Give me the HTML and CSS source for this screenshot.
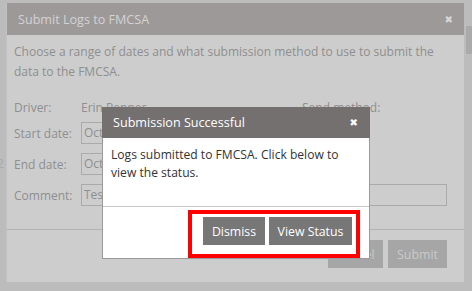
FILE: index.html
```html
<!DOCTYPE html>
<html>
<head>
<meta charset="utf-8">
<link rel="stylesheet" href="styles.css">
</head>
<body>
<div class="screen">
  <div class="side-mark">2</div>
  <div class="scroll-thumb"></div>
  <div class="dialog">
    <div class="dlg-header">
      <span class="dlg-title">Submit Logs to FMCSA</span>
      <span class="dlg-close">&#x2716;</span>
    </div>
    <div class="dlg-body">
      <p class="intro">Choose a range of dates and what submission method to use to submit the data to the FMCSA.</p>
      <div class="form">
        <div class="lbl top">Driver:</div>
        <div class="val top">Erin Penner</div>
        <div class="lbl top">Send method:</div>
        <div class="lbl">Start date:</div>
        <div class="field short">Oct 1, 2018</div>
        <div class="empty"></div>
        <div class="lbl">End date:</div>
        <div class="field short">Oct 7, 2018</div>
        <div class="empty"></div>
        <div class="lbl">Comment:</div>
        <div class="field wide">Test</div>
      </div>
    </div>
    <div class="dlg-footer">
      <button class="btn-muted">Cancel</button>
      <button class="btn-muted">Submit</button>
    </div>
  </div>

  <div class="modal">
    <div class="modal-header">
      <span class="modal-title">Submission Successful</span>
      <span class="modal-close">&#x2716;</span>
    </div>
    <div class="modal-body">Logs submitted to FMCSA. Click below to view the status.</div>
    <div class="modal-footer">
      <div class="highlight">
        <button class="btn">Dismiss</button>
        <button class="btn">View Status</button>
      </div>
    </div>
  </div>
</div>
</body>
</html>
```
FILE: styles.css
```css
* { box-sizing: border-box; }
html, body {
  margin: 0;
  padding: 0;
}
body {
  width: 472px;
  height: 291px;
  overflow: hidden;
  background: #bcbcbc;
  font-family: "Open Sans", "DejaVu Sans", sans-serif;
  font-size: 12px;
}
.screen {
  position: relative;
  width: 472px;
  height: 291px;
  padding: 3px 0 0 6px;
}
.side-mark {
  position: absolute;
  left: -3px;
  top: 155px;
  color: #a9a9a9;
  font-size: 12px;
}
.scroll-thumb {
  position: absolute;
  left: 466px;
  top: 26px;
  width: 6px;
  height: 28px;
  background: #aaaaaa;
}
.dialog {
  width: 458px;
  height: 279px;
  background: #cdcdcd;
  border-left: 1px solid #c2c2c2;
  display: flex;
  flex-direction: column;
}
.dlg-header {
  height: 32px;
  background: #9d9999;
  display: flex;
  align-items: center;
  justify-content: space-between;
  padding: 0 11px 0 11px;
}
.dlg-title {
  color: #d4d2d2;
  font-size: 12.6px;
}
.dlg-close {
  color: #d8d6d6;
  font-size: 10px;
  font-family: "DejaVu Sans", sans-serif;
}
.dlg-body {
  height: 195px;
  padding: 7px 8px 0 7px;
  border-bottom: 1px solid #b3b3b3;
  color: #8f8f8f;
}
.intro {
  margin: 0;
  line-height: 20px;
  width: 440px;
}
.form {
  margin-top: 16px;
  display: grid;
  grid-template-columns: 67px 221px 145px;
  grid-template-rows: 15px 22px 22px 22px;
  row-gap: 9px;
  align-items: center;
}
.lbl { white-space: nowrap; }
.top {
  align-self: start;
  line-height: 20px;
  white-space: nowrap;
}
.field {
  height: 22px;
  border: 1px solid #aaaaaa;
  padding: 0 0 0 2px;
  line-height: 20px;
  color: #8f8f8f;
  overflow: hidden;
}
.field.short { width: 170px; }
.field.wide { grid-column: 2 / 4; width: 366px; }
.dlg-footer {
  flex: 1;
  display: flex;
  justify-content: flex-end;
  gap: 5px;
  padding: 10px 17px 0 0;
}
.btn-muted {
  height: 28px;
  border: none;
  background: #a6a6a6;
  color: #c9c9c9;
  font-family: inherit;
  font-size: 12.4px;
  padding: 0;
}
.btn-muted:first-child { width: 55px; }
.btn-muted:last-child { width: 59px; }

.modal {
  position: absolute;
  left: 102px;
  top: 107px;
  width: 268px;
  height: 152px;
  background: #ffffff;
  border: 1px solid #9a9a9a;
  border-top: none;
  display: flex;
  flex-direction: column;
}
.modal-header {
  height: 31px;
  background: #74706f;
  display: flex;
  align-items: center;
  justify-content: space-between;
  padding: 0 12px 0 11px;
  margin: 0 -1px;
}
.modal-title {
  color: #ffffff;
  font-size: 12.6px;
}
.modal-close {
  color: #ffffff;
  font-size: 10px;
  font-family: "DejaVu Sans", sans-serif;
}
.modal-body {
  height: 69px;
  padding: 8px 10px 0 8px;
  line-height: 18px;
  color: #333333;
  font-size: 12.1px;
  border-bottom: 1px solid #c8c8c8;
}
.modal-footer {
  flex: 1;
  display: flex;
  justify-content: flex-end;
  align-items: flex-start;
  padding: 3px 9px 0 0;
}
.highlight {
  border: 4px solid #ff0000;
  padding: 3px 4px 9px 11px;
  display: flex;
  gap: 4px;
  margin-bottom: -1px;
}
.btn {
  height: 28px;
  border: none;
  background: #777777;
  color: #ffffff;
  font-family: inherit;
  font-size: 12.3px;
  padding: 0;
}
.btn:first-child { width: 62px; }
.btn:last-child { width: 83px; }
```
